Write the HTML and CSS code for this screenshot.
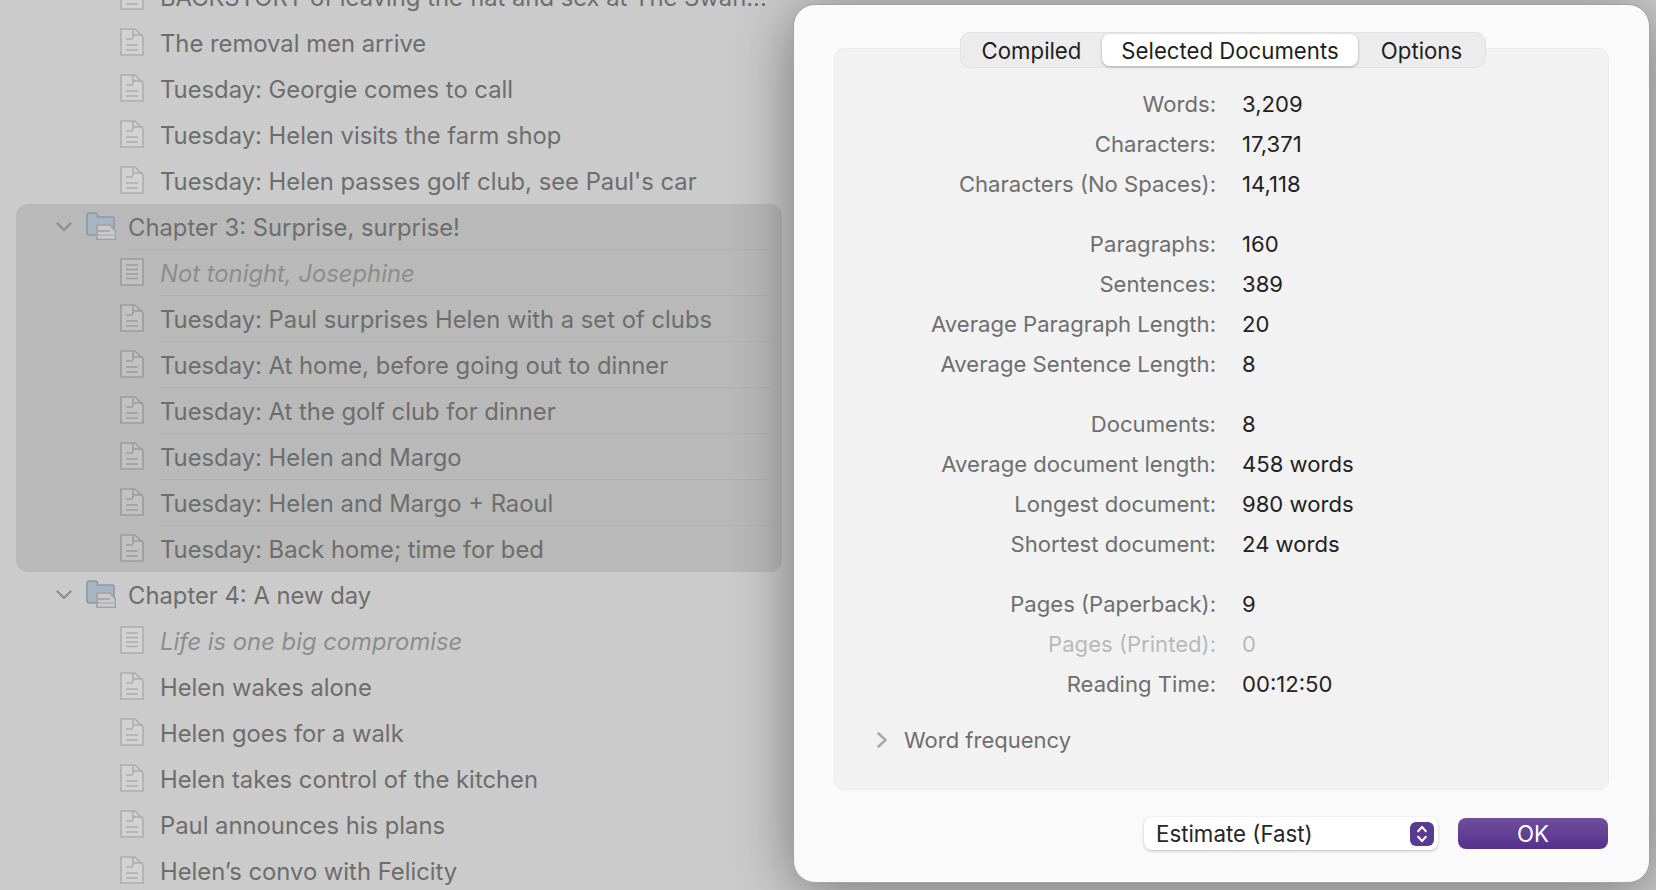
FILE: index.html
```html
<!DOCTYPE html>
<html lang="en">
<head>
<meta charset="utf-8">
<title>Project Statistics</title>
<link rel="stylesheet" href="styles.css">
</head>
<body>
<svg class="defs" width="0" height="0" aria-hidden="true">
  <symbol id="doc" viewBox="0 0 24 28">
    <path class="ic ic-body" d="M1 1H15L23 9V27H1Z"/>
    <path class="ic" d="M13 1V10M13 7H23"/>
    <path class="ic" d="M6 11H13M6 17H18M6 22H18"/>
  </symbol>
  <symbol id="plain" viewBox="0 0 24 28">
    <path class="ic ic-body" d="M1 1H23V27H1Z"/>
    <path class="ic" d="M6 7H18M6 11.500H18M6 16H18M6 20.500H18"/>
  </symbol>
  <symbol id="folder" viewBox="0 0 30 28">
    <path class="fold" d="M1 6V3.500Q1 1 3.500 1H9Q11.500 1 11.500 3.500V5H26Q28 5 28 7V23H3Q1 23 1 21Z"/>
    <path class="sheet" d="M11 13H24L29.500 19V27.500H11Z"/>
    <path class="red" d="M12 19H24"/>
    <path class="blue" d="M12 23H28"/>
  </symbol>
  <symbol id="chev-d" viewBox="0 0 16 10">
    <path class="chev" d="M1.500 1.500L8 8L14.500 1.500"/>
  </symbol>
</svg>

<main class="binder">
  <div class="row doc"><svg class="i-doc"><use href="#doc"/></svg><span class="t">BACKSTORY of leaving the flat and sex at The Swan...</span></div>
  <div class="row doc"><svg class="i-doc"><use href="#doc"/></svg><span class="t">The removal men arrive</span></div>
  <div class="row doc"><svg class="i-doc"><use href="#doc"/></svg><span class="t">Tuesday: Georgie comes to call</span></div>
  <div class="row doc"><svg class="i-doc"><use href="#doc"/></svg><span class="t">Tuesday: Helen visits the farm shop</span></div>
  <div class="row doc"><svg class="i-doc"><use href="#doc"/></svg><span class="t">Tuesday: Helen passes golf club, see Paul's car</span></div>

  <section class="selected">
    <div class="row chapter"><svg class="i-chev"><use href="#chev-d"/></svg><svg class="i-folder"><use href="#folder"/></svg><span class="t">Chapter 3: Surprise, surprise!</span></div>
    <div class="row doc"><svg class="i-doc"><use href="#plain"/></svg><span class="t note">Not tonight, Josephine</span></div>
    <div class="row doc"><svg class="i-doc"><use href="#doc"/></svg><span class="t">Tuesday: Paul surprises Helen with a set of clubs</span></div>
    <div class="row doc"><svg class="i-doc"><use href="#doc"/></svg><span class="t">Tuesday: At home, before going out to dinner</span></div>
    <div class="row doc"><svg class="i-doc"><use href="#doc"/></svg><span class="t">Tuesday: At the golf club for dinner</span></div>
    <div class="row doc"><svg class="i-doc"><use href="#doc"/></svg><span class="t">Tuesday: Helen and Margo</span></div>
    <div class="row doc"><svg class="i-doc"><use href="#doc"/></svg><span class="t">Tuesday: Helen and Margo + Raoul</span></div>
    <div class="row doc"><svg class="i-doc"><use href="#doc"/></svg><span class="t">Tuesday: Back home; time for bed</span></div>
  </section>

  <div class="row chapter"><svg class="i-chev"><use href="#chev-d"/></svg><svg class="i-folder"><use href="#folder"/></svg><span class="t">Chapter 4: A new day</span></div>
  <div class="row doc"><svg class="i-doc"><use href="#plain"/></svg><span class="t note">Life is one big compromise</span></div>
  <div class="row doc"><svg class="i-doc"><use href="#doc"/></svg><span class="t">Helen wakes alone</span></div>
  <div class="row doc"><svg class="i-doc"><use href="#doc"/></svg><span class="t">Helen goes for a walk</span></div>
  <div class="row doc"><svg class="i-doc"><use href="#doc"/></svg><span class="t">Helen takes control of the kitchen</span></div>
  <div class="row doc"><svg class="i-doc"><use href="#doc"/></svg><span class="t">Paul announces his plans</span></div>
  <div class="row doc"><svg class="i-doc"><use href="#doc"/></svg><span class="t">Helen’s convo with Felicity</span></div>
</main>

<aside class="dialog">
  <div class="panel">
    <nav class="tabs">
      <span class="tab tab-a">Compiled</span>
      <span class="tab tab-b active">Selected Documents</span>
      <span class="tab tab-c">Options</span>
    </nav>
    <div class="stats">
      <div class="group">
        <div class="stat"><span class="k">Words:</span><span class="v">3,209</span></div>
        <div class="stat"><span class="k">Characters:</span><span class="v">17,371</span></div>
        <div class="stat"><span class="k">Characters (No Spaces):</span><span class="v">14,118</span></div>
      </div>
      <div class="group">
        <div class="stat"><span class="k">Paragraphs:</span><span class="v">160</span></div>
        <div class="stat"><span class="k">Sentences:</span><span class="v">389</span></div>
        <div class="stat"><span class="k">Average Paragraph Length:</span><span class="v">20</span></div>
        <div class="stat"><span class="k">Average Sentence Length:</span><span class="v">8</span></div>
      </div>
      <div class="group">
        <div class="stat"><span class="k">Documents:</span><span class="v">8</span></div>
        <div class="stat"><span class="k">Average document length:</span><span class="v">458 words</span></div>
        <div class="stat"><span class="k">Longest document:</span><span class="v">980 words</span></div>
        <div class="stat"><span class="k">Shortest document:</span><span class="v">24 words</span></div>
      </div>
      <div class="group">
        <div class="stat"><span class="k">Pages (Paperback):</span><span class="v">9</span></div>
        <div class="stat off"><span class="k">Pages (Printed):</span><span class="v">0</span></div>
        <div class="stat"><span class="k">Reading Time:</span><span class="v">00:12:50</span></div>
      </div>
    </div>
    <div class="disclosure">
      <svg class="i-right" viewBox="0 0 10 16"><path d="M1.500 1.500L8.500 8L1.500 14.500"/></svg>
      <span>Word frequency</span>
    </div>
  </div>
  <footer class="actions">
    <div class="select">
      <span>Estimate (Fast)</span>
      <span class="stepper"><svg viewBox="0 0 12 20"><path d="M2.500 7.500L6 3.500L9.500 7.500M2.500 12.500L6 16.500L9.500 12.500"/></svg></span>
    </div>
    <button class="ok" type="button">OK</button>
  </footer>
</aside>
</body>
</html>
```

FILE: styles.css
```css
* { box-sizing: border-box; }

html, body {
  margin: 0;
  height: 100%;
  overflow: hidden;
}

body {
  position: relative;
  background: #cbcbcb;
  font-family: Inter, "Noto Sans", "Liberation Sans", sans-serif;
  --ic: #adadad;
  --ic-fill: #d2d2d2;
}

.defs { position: absolute; }

.binder {
  width: 790px;
  height: 916px;
  margin-top: -26px;
  padding-left: 16px;
  padding-right: 8px;
  font-size: 23.800px;
  color: #6d6d6d;
}

.row {
  display: flex;
  align-items: center;
  height: 46px;
  white-space: nowrap;
}

.selected {
  background: #b9b9b9;
  border-radius: 12px;
  --ic: #9c9c9c;
  --ic-fill: #c2c2c2;
}

.doc { padding-left: 104px; }
.chapter { padding-left: 40px; }

.i-doc {
  flex: none;
  width: 24px;
  height: 28px;
  margin-right: 16px;
  margin-top: -2px;
}

.i-chev {
  flex: none;
  width: 16px;
  height: 10px;
  margin-right: 14px;
}

.i-folder {
  flex: none;
  width: 30px;
  height: 28px;
  margin-right: 12px;
  margin-top: -2px;
}

.t {
  flex: 1;
  align-self: stretch;
  line-height: 48px;
}

.selected .t {
  border-bottom: 1px solid #b1b1b1;
  margin-right: 12px;
  line-height: 47px;
}

.selected .row:last-child .t { border-bottom: 0; }

.note {
  font-style: italic;
  color: #8d8d8d;
}

.ic { fill: none; stroke: var(--ic); stroke-width: 1.6; }
.ic-body { fill: var(--ic-fill); }
.fold { fill: #a5b5c5; stroke: #8d99a7; stroke-width: 1.6; }
.sheet { fill: #c9c9c9; stroke: #a0a0a0; stroke-width: 1.6; }
.red { stroke: #c0a09d; stroke-width: 2; }
.blue { stroke: #a9bccd; stroke-width: 2; }
.chev { fill: none; stroke: #8f8f8f; stroke-width: 2.400; stroke-linecap: round; stroke-linejoin: round; }

.dialog {
  position: absolute;
  left: 793px;
  top: 4px;
  width: 857px;
  height: 879px;
  padding: 43px 40px 0;
  background: #fafafa;
  border-radius: 22px;
  border: 1px solid #a3a3a3;
  box-shadow: 0 8px 60px rgba(0, 0, 0, 0.42);
}

.panel {
  position: relative;
  height: 742px;
  background: #f2f2f2;
  border: 1px solid #ebebeb;
  border-radius: 10px;
  padding-top: 35px;
}

.tabs {
  position: absolute;
  left: 125px;
  top: -17px;
  width: 526px;
  height: 36px;
  display: flex;
  align-items: center;
  background: #ececec;
  border: 1px solid #e2e2e2;
  border-radius: 10px;
  font-size: 22.200px;
  color: #1e1e1e;
}

.tab {
  display: flex;
  align-items: center;
  justify-content: center;
  height: 32px;
}

.tab-a { width: 141px; }
.tab-b { width: 256px; }
.tab-c { flex: 1; }

.active {
  background: #fff;
  border-radius: 8px;
  box-shadow: 0 1px 3px rgba(0, 0, 0, 0.28);
}

.stats {
  display: flex;
  flex-direction: column;
  gap: 20px;
  font-size: 22.100px;
}

.stat {
  display: flex;
  height: 40px;
  align-items: center;
  gap: 26px;
}

.k {
  width: 381px;
  text-align: right;
  color: #6e6e6e;
}

.v { color: #222; }

.off .k, .off .v { color: #b9b9b9; }

.disclosure {
  display: flex;
  align-items: center;
  gap: 17px;
  margin-top: 23px;
  padding-left: 42px;
  font-size: 22px;
  color: #6e6e6e;
}

.i-right {
  width: 10px;
  height: 16px;
  fill: none;
  stroke: #ababab;
  stroke-width: 2.600;
  stroke-linecap: round;
  stroke-linejoin: round;
}

.actions {
  display: flex;
  justify-content: flex-end;
  align-items: center;
  gap: 20px;
  margin-top: 27px;
  padding-right: 1px;
}

.select {
  width: 294px;
  height: 33px;
  display: flex;
  align-items: center;
  justify-content: space-between;
  padding: 0 4px 0 12px;
  background: #fff;
  border-radius: 8px;
  box-shadow: 0 1px 3px rgba(0, 0, 0, 0.25);
  font-size: 22.300px;
  color: #262626;
}

.stepper {
  display: flex;
  align-items: center;
  justify-content: center;
  width: 24px;
  height: 24px;
  background: #5b3a91;
  border-radius: 6px;
}

.stepper svg {
  width: 14px;
  height: 22px;
  fill: none;
  stroke: #fff;
  stroke-width: 1.800;
  stroke-linecap: round;
  stroke-linejoin: round;
}

.ok {
  width: 150px;
  height: 31px;
  padding: 0;
  border: 0;
  border-radius: 8px;
  background: linear-gradient(#6f4f9e, #55318a);
  color: #fff;
  font: inherit;
  font-size: 22.300px;
}
```
